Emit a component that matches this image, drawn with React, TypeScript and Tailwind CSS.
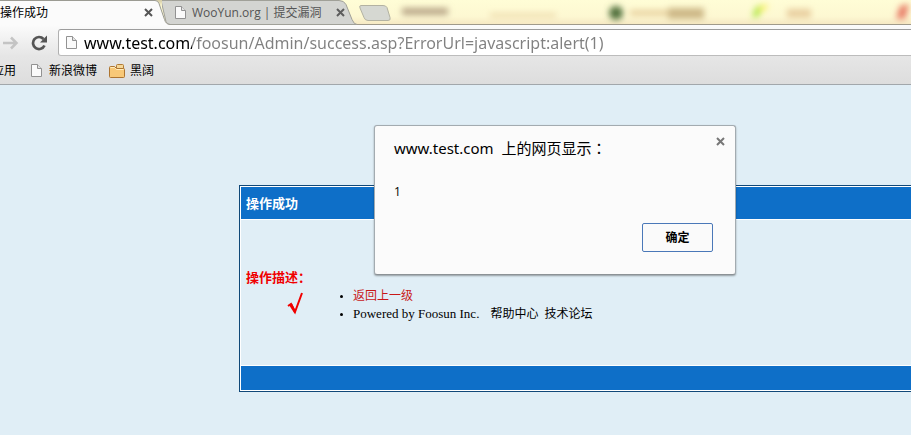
import type { ReactNode } from "react";

const UI_FONT = "font-['Open_Sans','Noto_Sans_CJK_SC',sans-serif]";
const WIDE_FONT = "font-['Noto_Sans','Noto_Sans_CJK_SC',sans-serif]";
const PAGE_FONT = "font-['Liberation_Serif','Noto_Sans_CJK_SC',serif]";

function PageIcon({ className = "" }: { className?: string }) {
  return (
    <svg className={`h-[15px] w-[13px] shrink-0 ${className}`} viewBox="0 0 13 15" aria-hidden="true">
      <path d="M1.5 1.5h6l4 4v8h-10z" fill="#fafafa" stroke="#929292" />
      <path d="M7.5 1.5v4h4" fill="#e4e4e4" stroke="#929292" />
    </svg>
  );
}

function FolderIcon() {
  return (
    <svg className="h-[14px] w-[16px] shrink-0" viewBox="0 0 16 14" aria-hidden="true">
      <path d="M7.500 4v-2.500q0-1 1-1h5q1 0 1 1v3" fill="#f5d798" stroke="#b07a35" />
      <path d="M1.500 13.500q-1 0-1-1v-9q0-1 1-1h4l2 2h7q1 0 1 1v7q0 1-1 1z" fill="#f8c877" stroke="#ad7430" />
      <path d="M1.500 3.500h4l2 2h7" fill="none" stroke="#ffedbe" />
    </svg>
  );
}

function CloseIcon({ color }: { color: string }) {
  return (
    <svg className="h-[9px] w-[9px]" viewBox="0 0 9 9" aria-hidden="true">
      <path d="M1 1l7 7M8 1l-7 7" stroke={color} strokeWidth="2" />
    </svg>
  );
}

function DesktopBlur() {
  return (
    <svg className="absolute inset-0 h-[25px] w-[911px]" viewBox="0 0 911 25" aria-hidden="true">
      <defs>
        <filter id="soft" x="-50%" y="-100%" width="200%" height="300%">
          <feGaussianBlur stdDeviation="3" />
        </filter>
        <linearGradient id="sky" x1="0" y1="0" x2="0" y2="1">
          <stop offset="0" stopColor="#fffdd6" />
          <stop offset="0.65" stopColor="#fdf8d2" />
          <stop offset="1" stopColor="#f5e7c2" />
        </linearGradient>
      </defs>
      <rect width="911" height="25" fill="url(#sky)" />
      <g filter="url(#soft)">
        <rect x="0" y="-3" width="300" height="4" fill="#a08d67" />
        <rect x="304" y="-4" width="20" height="5" fill="#e8a060" />
        <rect x="402" y="8" width="46" height="7" fill="#b8a587" />
        <rect x="490" y="13" width="66" height="5" fill="#f0dfb2" />
        <circle cx="616" cy="13" r="7" fill="#51713c" />
        <rect x="630" y="10" width="42" height="6" fill="#e9d3a2" />
        <rect x="668" y="8" width="36" height="11" fill="#cdb887" />
        <path d="M752 18l4-11 7-2-4 11z" fill="#a8e53e" />
        <path d="M758 10l6-6 5 2-7 6z" fill="#fbf26a" />
        <rect x="787" y="9" width="24" height="9" fill="#e9cfa0" />
        <path d="M896 19l4-13 9-2-4 15z" fill="#e87b66" />
      </g>
    </svg>
  );
}

function Tab({ active, children }: { active?: boolean; children: ReactNode }) {
  return (
    <div
      className={
        active
          ? "relative z-10 flex h-[25px] w-[170px] shrink-0 items-center pr-[17px]"
          : "relative -ml-2 flex h-[25px] w-[198px] shrink-0 items-center pr-[15px] pl-3"
      }
    >
      {active ? (
        <svg className="absolute inset-0 h-[25px] w-[170px]" viewBox="0 0 170 25" aria-hidden="true">
          <path d="M-2 .5h157q3 0 4 3l5.500 16q1.500 5 5.500 5V25H-2z" fill="#fbfbfb" />
          <path d="M-2 .5h157q3 0 4 3l5.500 16q1.500 5 5.500 5" fill="none" stroke="#9b9b93" />
        </svg>
      ) : (
        <svg className="absolute inset-0 h-[25px] w-[198px]" viewBox="0 0 198 25" aria-hidden="true">
          <path
            d="M-1 .5h178q5 0 7 4l6 15q2 5 5 5H8q-3 0-4-3z"
            fill="#d3d4d1"
            stroke="#a0a098"
          />
        </svg>
      )}
      {children}
    </div>
  );
}

function TabStrip() {
  return (
    <div className="relative h-[25px] overflow-hidden">
      <DesktopBlur />
      <div className="relative flex text-[12px] leading-4">
        <div className="absolute inset-x-0 top-[24px] h-px bg-[#a09a8a]" />
        <Tab active>
          <span className="relative grow text-black">操作成功</span>
          <button type="button" aria-label="关闭标签页" className="relative">
            <CloseIcon color="#555555" />
          </button>
        </Tab>
        <Tab>
          <PageIcon className="relative mr-[5px]" />
          <span className="relative grow whitespace-nowrap text-[#555555]">WooYun.org | 提交漏洞</span>
          <button type="button" aria-label="关闭标签页" className="relative">
            <CloseIcon color="#5d5d5d" />
          </button>
        </Tab>
        <button type="button" aria-label="新标签页" className="relative -ml-px mt-[5px] h-4">
          <svg className="h-4 w-[32px]" viewBox="0 0 32 16" aria-hidden="true">
            <path
              d="M2 .5h22q3 0 4 2l3 10q1 3-2 3H9q-3 0-4-3L1 3Q0 .5 2 .5z"
              fill="#d6d8d2"
              stroke="#b3b2a2"
            />
          </svg>
        </button>
      </div>
    </div>
  );
}

function Toolbar() {
  return (
    <div className="flex h-[31px] items-center bg-linear-to-b from-[#fbfbfb] to-[#e6e6e6] pt-1">
      <button type="button" aria-label="前进" className="mr-3 ml-[3px]">
        <svg className="h-[14px] w-[16px]" viewBox="0 0 16 14" aria-hidden="true">
          <path d="M0 7h13M8 1.500l5.500 5.500L8 12.500" fill="none" stroke="#c4c4c4" strokeWidth="2.500" />
        </svg>
      </button>
      <button type="button" aria-label="重新加载" className="mr-[10px]">
        <svg className="h-4 w-[17px]" viewBox="0 0 17 16" aria-hidden="true">
          <path d="M12.500 4A6 6 0 1 0 13.500 10.500" fill="none" stroke="#555" strokeWidth="2.700" />
          <path d="M16 .5V7.500H9z" fill="#555" />
        </svg>
      </button>
      <div className="flex h-[27px] min-w-0 grow items-center rounded-l-[3px] border border-r-0 border-t-[#9c9c9c] border-b-[#bcbcbc] border-l-[#b0b0b0] bg-white pl-[6px]">
        <PageIcon />
        <input
          type="text"
          aria-label="地址"
          defaultValue="www.test.com/foosun/Admin/success.asp?ErrorUrl=javascript:alert(1)"
          className={`ml-[6px] h-6 min-w-0 grow bg-linear-to-r from-black from-[108px] to-[#808080] to-[108px] bg-clip-text text-[16px] leading-6 text-transparent outline-none ${WIDE_FONT}`}
        />
      </div>
    </div>
  );
}

function BookmarksBar() {
  return (
    <nav className="flex h-[29px] items-center overflow-hidden border-b border-[#a2a7ab] bg-linear-to-b from-[#e6e6e6] to-[#dddddd] pt-px text-[12px] leading-4 whitespace-nowrap text-black">
      <a href="#apps" className="-ml-2 w-6">应用</a>
      <a href="#weibo" className="ml-[14px] flex items-center gap-[6px]">
        <PageIcon />
        新浪微博
      </a>
      <a href="#folder" className="ml-3 flex items-center gap-[5px]">
        <FolderIcon />
        黑阔
      </a>
    </nav>
  );
}

function ResultPanel() {
  return (
    <section
      className={`mt-[100px] ml-[239px] h-[207px] border border-r-0 border-[#104878] text-[12px] leading-[18px] ${PAGE_FONT}`}
    >
      <div className="flex h-full flex-col border border-r-0 border-white">
        <h1 className="flex h-8 items-center bg-[#0e6fc8] pt-px pl-[5px] text-[13px] font-bold text-white">操作成功</h1>
        <div className="grow border-y border-white pt-[49px] pl-[5px]">
          <h2 className="text-[13px] leading-[18px] font-bold text-[#f00000]">操作描述：</h2>
          <div className="flex">
            <svg className="mt-[5px] ml-[41px] h-6 w-[18px]" viewBox="0 0 18 24" role="img" aria-label="成功">
              <path d="M1 14l3-2 4 8 7-19" fill="none" stroke="#f00000" strokeWidth="2" />
              <path d="M2 13l3-1.500 4 8-1.500 2z" fill="#f00000" />
            </svg>
            <ul className="ml-12 list-disc text-black marker:text-[10px]">
              <li>
                <a href="#back" className="text-[#c81818]">返回上一级</a>
              </li>
              <li className="whitespace-nowrap">
                <span className="text-[13px]">Powered by Foosun Inc.</span>
                <a href="#help" className="ml-[11px]">帮助中心</a>
                <a href="#forum" className="ml-[6px]">技术论坛</a>
              </li>
            </ul>
          </div>
        </div>
        <div className="h-6 bg-[#0e6fc8]" />
      </div>
    </section>
  );
}

function AlertDialog() {
  return (
    <div
      role="alertdialog"
      aria-labelledby="alert-title"
      className="absolute top-[125px] left-[374px] flex w-[362px] flex-col rounded-[3px] border border-[#a3abb0] border-b-[#8c9296] bg-[#fbfbfb] pt-[11px] pr-[22px] pb-[22px] pl-[19px] text-black shadow-[0_1px_2px_rgba(0,0,0,0.35)]"
    >
      <h2 id="alert-title" className={`flex gap-2 text-[15px] leading-[22px] ${WIDE_FONT}`}>
        <span>www.test.com</span>
        <span>
          上的网页显示<span className="font-['Noto_Sans_CJK_TC',sans-serif]">：</span>
        </span>
      </h2>
      <p className="mt-[22px] mb-[20px] text-[12px] leading-[22px]">1</p>
      <button
        type="button"
        className="h-[29px] w-[71px] self-end rounded-[2px] border border-[#4a78b8] bg-[#fafafa] text-[12px] font-bold"
      >
        确定
      </button>
      <button type="button" aria-label="关闭" className="absolute top-[11px] right-[10px] flex">
        <CloseIcon color="#777777" />
      </button>
    </div>
  );
}

export default function App() {
  return (
    <div className={`relative min-h-screen overflow-hidden bg-[#e0eef6] ${UI_FONT}`}>
      <TabStrip />
      <Toolbar />
      <BookmarksBar />
      <main>
        <ResultPanel />
      </main>
      <AlertDialog />
    </div>
  );
}
